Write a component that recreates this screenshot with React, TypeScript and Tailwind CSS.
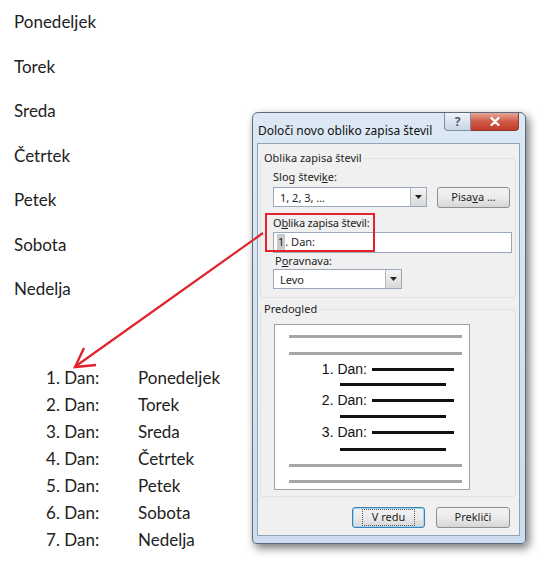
import React from 'react';

const days = ['Ponedeljek', 'Torek', 'Sreda', 'Četrtek', 'Petek', 'Sobota', 'Nedelja'];

const ui = "font-['Noto_Sans',sans-serif] text-[11px] text-[#1e1e1e]";

const DropArrow: React.FC = () => (
  <div className="w-[16px] h-full border-l border-[#a9b7c6] bg-gradient-to-b from-[#f4f4f4] to-[#d9d9d9] flex items-center justify-center">
    <svg width="7" height="4" viewBox="0 0 7 4">
      <path d="M0 0 H7 L3.5 4 Z" fill="#222" />
    </svg>
  </div>
);

const Combo: React.FC<{ value: string; width: string }> = ({ value, width }) => (
  <div className={`${width} h-[20px] border border-[#9aa8b8] bg-white flex items-center`}>
    <span className="flex-1 pl-[6px] leading-none">{value}</span>
    <DropArrow />
  </div>
);

const Button: React.FC<{ children: React.ReactNode; width: string; focused?: boolean }> = ({ children, width, focused }) => (
  <div
    className={`${width} h-[21px] rounded-[3px] border flex items-center justify-center bg-gradient-to-b from-[#f2f2f2] via-[#ebebeb] to-[#d6d6d6] ${
      focused ? 'border-[#3c7fb1] shadow-[inset_0_0_0_1px_#9fd5f5]' : 'border-[#8e8f8f]'
    }`}
  >
    <span className={focused ? 'px-[10px] outline-1 outline-dotted outline-[#555] -outline-offset-1' : ''}>{children}</span>
  </div>
);

const PreviewItem: React.FC<{ n: number }> = ({ n }) => (
  <div className="flex items-center h-[16px]">
    <span className="w-[92px] text-right font-['Liberation_Sans',sans-serif] text-[14px] text-[#111] leading-none">{n}. Dan:</span>
    <div className="ml-[5px] w-[82px] h-[3px] bg-[#111]" />
  </div>
);

const Dialog: React.FC = () => (
  <div className={`${ui} mt-[112px] w-[274px] h-[432px] rounded-t-[6px] rounded-b-[4px] border border-[#5d6b7a] bg-gradient-to-b from-[#dce8f4] to-[#cddcee] shadow-[3px_4px_10px_rgba(0,0,0,0.55)] flex flex-col pl-[4px] pr-[5px] pb-[7px]`}>
    <div className="h-[30px] flex items-start shrink-0">
      <span className="pl-[1px] pt-[9px] text-[12px] text-[#111]">Določi novo obliko zapisa števil</span>
      <div className="ml-auto flex mr-[1px]">
        <div className="w-[27px] h-[18px] rounded-bl-[4px] border border-t-0 border-[#7f8fa3] bg-gradient-to-b from-[#eef3f8] to-[#c8d5e4] flex items-center justify-center text-[12px] font-bold text-[#4b5b6d] leading-none">
          ?
        </div>
        <div className="w-[48px] h-[18px] rounded-br-[4px] border border-l-0 border-t-0 border-[#8a3a32] bg-gradient-to-b from-[#e6a697] via-[#cf5a46] to-[#c23a28] flex items-center justify-center">
          <svg width="10" height="9" viewBox="0 0 10 9">
            <path d="M1.5 1 L8.5 8 M8.5 1 L1.5 8" stroke="#fff" strokeWidth="2.2" strokeLinecap="round" />
          </svg>
        </div>
      </div>
    </div>

    <div className="flex-1 border border-[#8fa3b9] bg-[#f0f0f0] flex flex-col pt-[6px] relative">
      <fieldset className="ml-[2px] mr-[3px] border border-[#dce3e8] rounded-[3px] pl-[12px] pt-[3px] pb-[8px]">
        <legend className="-ml-[11px] px-[2px] leading-[16px]">Oblika zapisa števil</legend>
        <div className="leading-[16px]">Slog števi<u>k</u>e:</div>
        <div className="mt-[2px] flex">
          <Combo value="1, 2, 3, …" width="w-[154px]" />
          <div className="ml-[10px]">
            <Button width="w-[73px]">Pisa<u>v</u>a …</Button>
          </div>
        </div>
        <div className="mt-[7px] leading-[16px] tracking-[-0.2px]">O<u>b</u>lika zapisa števil:</div>
        <div className="mt-[1px] w-[239px] h-[21px] border border-[#9aa8b8] bg-white flex items-center pl-[3px]">
          <span className="bg-[#c9c9c9] px-[1px]">1</span>
          <span>. Dan:</span>
        </div>
        <div className="leading-[16px] pl-[2px]">P<u>o</u>ravnava:</div>
        <Combo value="Levo" width="w-[129px]" />
      </fieldset>

      <fieldset className="mt-[3px] ml-[2px] mr-[3px] border border-[#dce3e8] rounded-[3px] pl-[13px] pt-[7px] pb-[6px]">
        <legend className="-ml-[12px] px-[2px] leading-[16px]">Predogled</legend>
        <div className="w-[196px] h-[166px] border border-[#a0a0a0] bg-white flex flex-col">
          <div className="mt-[10px] ml-[14px] w-[173px] h-[3px] bg-[#a6a6a6]" />
          <div className="mt-[14px] ml-[14px] w-[173px] h-[3px] bg-[#a6a6a6]" />
          <div className="mt-[6px]"><PreviewItem n={1} /></div>
          <div className="mt-[6px] ml-[65px] w-[106px] h-[3px] bg-[#111]" />
          <div className="mt-[6px]"><PreviewItem n={2} /></div>
          <div className="mt-[7px] ml-[65px] w-[106px] h-[3px] bg-[#111]" />
          <div className="mt-[6px]"><PreviewItem n={3} /></div>
          <div className="mt-[8px] ml-[65px] w-[106px] h-[3px] bg-[#111]" />
          <div className="mt-[13px] ml-[14px] w-[173px] h-[3px] bg-[#a6a6a6]" />
          <div className="mt-[13px] ml-[14px] w-[173px] h-[3px] bg-[#a6a6a6]" />
        </div>
      </fieldset>

      <div className="mt-[10px] flex justify-end gap-[11px] pr-[9px]">
        <Button width="w-[73px]" focused>V redu</Button>
        <Button width="w-[74px]">Prekliči</Button>
      </div>

      <div className="absolute left-[7px] top-[69px] w-[110px] h-[39px] border-[2.5px] border-[#e3212b] pointer-events-none" />
    </div>
  </div>
);

export default function App() {
  return (
    <div className="relative w-[545px] h-[565px] bg-white overflow-hidden flex">
      <div className="w-[252px] shrink-0 pl-[14px] font-['Lato',sans-serif] text-[17px] text-[#222]">
        <div className="flex flex-col">
          {days.map((d) => (
            <div key={d} className="h-[44.5px] leading-[44.5px]">{d}</div>
          ))}
        </div>
        <div className="mt-[52px] flex flex-col pl-[32px]">
          {days.map((d, i) => (
            <div key={d} className="h-[27px] leading-[27px] flex">
              <span className="w-[92px]">{i + 1}. Dan:</span>
              <span>{d}</span>
            </div>
          ))}
        </div>
      </div>
      <Dialog />
      <svg className="absolute inset-0 pointer-events-none" width="545" height="565" viewBox="0 0 545 565">
        <path d="M263 233 L76 366" stroke="#e3212b" strokeWidth="2.2" fill="none" />
        <path d="M84 348 L75 367 L96 365" stroke="#e3212b" strokeWidth="2.4" fill="none" strokeLinejoin="miter" />
      </svg>
    </div>
  );
}
